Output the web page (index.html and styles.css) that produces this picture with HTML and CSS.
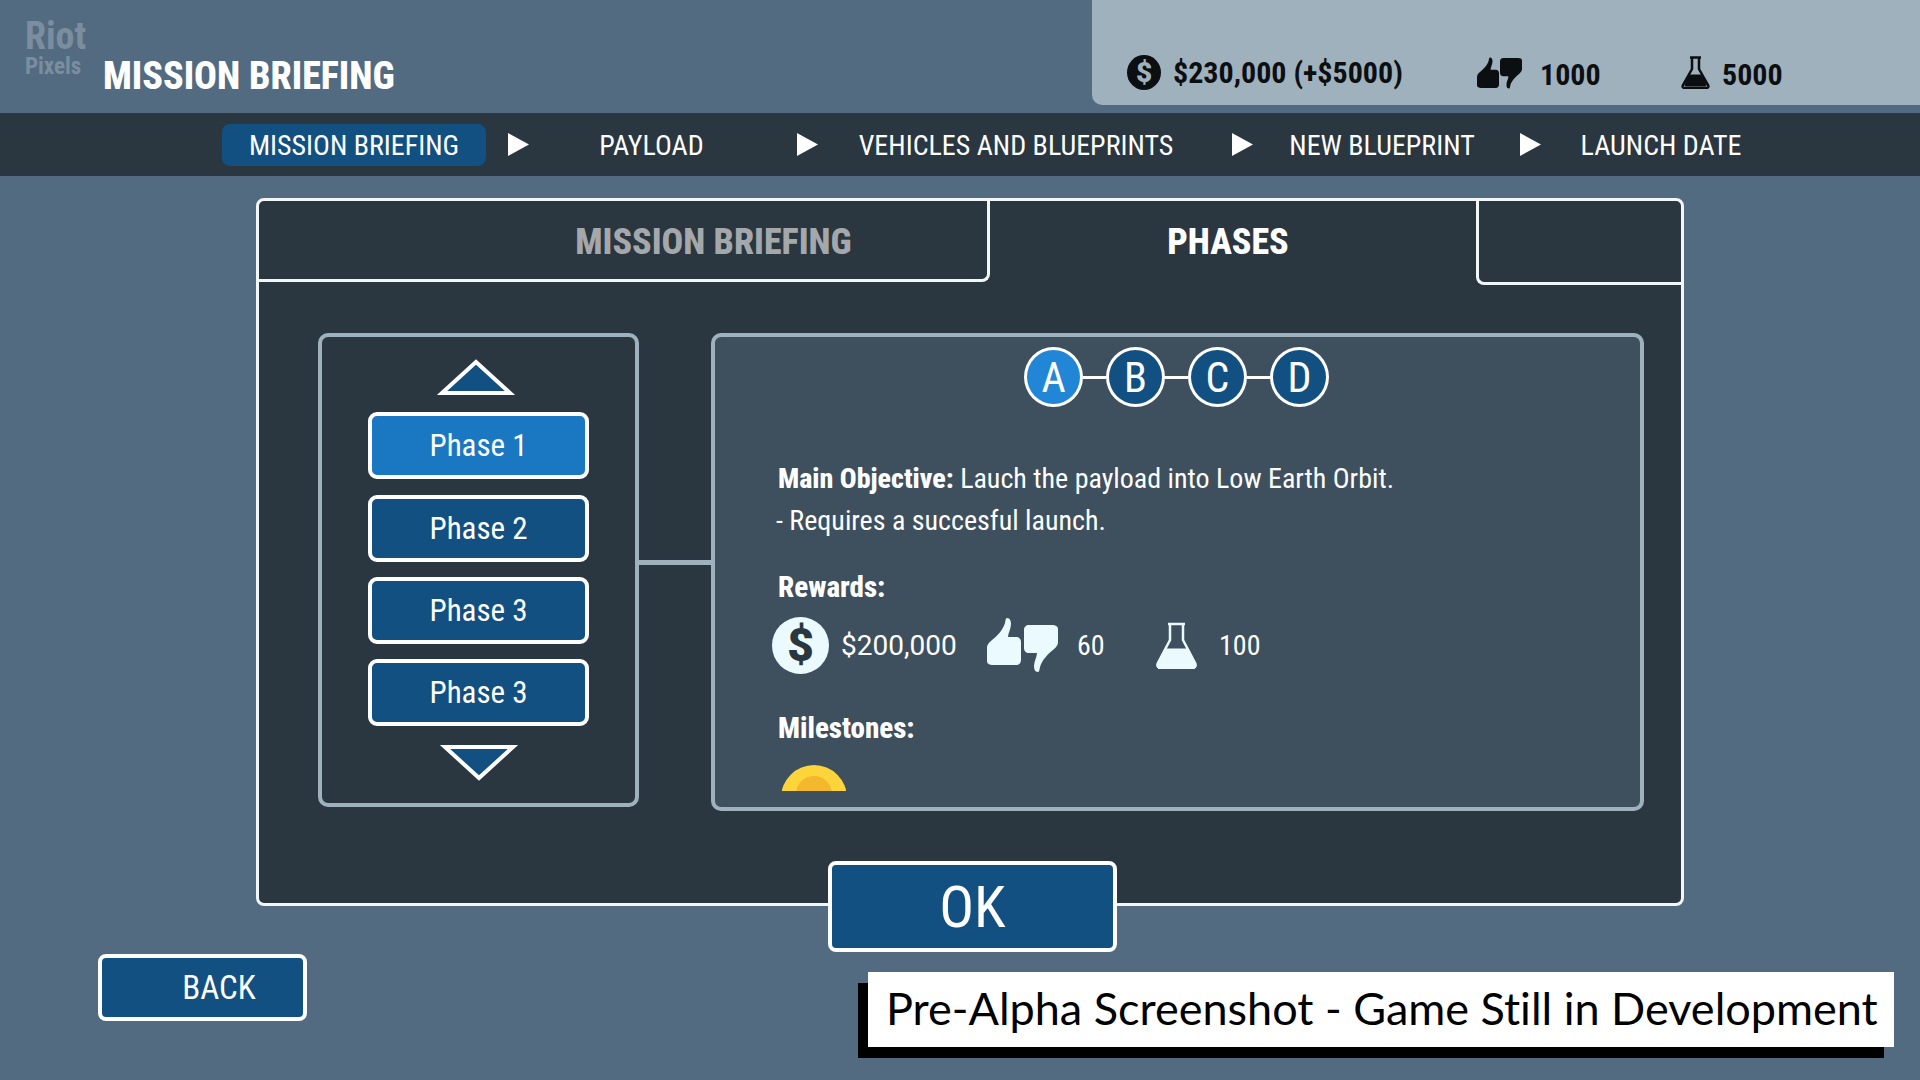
FILE: index.html
```html
<!DOCTYPE html>
<html lang="en">
  <head>
    <meta charset="UTF-8" />
    <title>Mission Briefing</title>
    <link rel="stylesheet" href="styles.css">
  </head>
  <body>
    <svg class="defs" width="0" height="0">
      <symbol id="thumb-up" viewBox="0 0 34 48">
        <path d="M20 0c3 0 4 3 4 6 0 5-3 9-3 13h8c3 0 5 2 5 5v18c0 3-2 5-5 5H6c-3 0-6-1-6-4V30c0-4 3-6 5-8 5-4 11-10 13-17 .5-2 .5-5 2-5z" />
      </symbol>
      <symbol id="thumb-down" viewBox="0 0 34 48">
        <path transform="rotate(180 17 24)" d="M20 0c3 0 4 3 4 6 0 5-3 9-3 13h8c3 0 5 2 5 5v18c0 3-2 5-5 5H6c-3 0-6-1-6-4V30c0-4 3-6 5-8 5-4 11-10 13-17 .5-2 .5-5 2-5z" />
      </symbol>
      <symbol id="arrow" viewBox="0 0 21 23">
        <polygon points="0,0 21,11.5 0,23" />
      </symbol>
    </svg>

    <div class="screen">
      <div class="logo"><b>Riot</b><span>Pixels</span></div>

      <header class="top">
        <h1>MISSION BRIEFING</h1>
        <div class="stats">
          <span class="coin coin-dark">$</span>
          <span class="stat-money">$230,000 (+$5000)</span>
          <span class="thumbs thumbs-small">
            <svg class="thumb"><use href="#thumb-up" /></svg>
            <svg class="thumb"><use href="#thumb-down" /></svg>
          </span>
          <span class="stat-rep">1000</span>
          <svg class="flask flask-small" viewBox="0 0 29 33">
            <path class="flask-line" d="M9 1.5h11M11 2v11L2 29c-1 2 0 3 2 3h21c2 0 3-1 2-3l-9-16V2" />
            <path d="M8 19h13l4 9c.5 1.5 0 2-1 2H5c-1 0-1.500-.5-1-2z" />
          </svg>
          <span class="stat-sci">5000</span>
        </div>
      </header>

      <nav class="steps">
        <span class="step step-current">MISSION BRIEFING</span>
        <svg class="step-arrow arrow-1"><use href="#arrow" /></svg>
        <span class="step step-payload">PAYLOAD</span>
        <svg class="step-arrow arrow-2"><use href="#arrow" /></svg>
        <span class="step step-vehicles">VEHICLES AND BLUEPRINTS</span>
        <svg class="step-arrow arrow-3"><use href="#arrow" /></svg>
        <span class="step step-new">NEW BLUEPRINT</span>
        <svg class="step-arrow arrow-4"><use href="#arrow" /></svg>
        <span class="step step-launch">LAUNCH DATE</span>
      </nav>

      <main class="card">
        <div class="tabs">
          <div class="tab tab-off">MISSION BRIEFING</div>
          <div class="tab tab-on">PHASES</div>
          <div class="tab tab-rest"></div>
        </div>

        <div class="card-body">
          <div class="phase-list">
            <svg class="list-arrow list-up" viewBox="0 0 80 36">
              <polygon points="40,3 74,34 6,34" />
            </svg>
            <button class="phase phase-active">Phase 1</button>
            <button class="phase">Phase 2</button>
            <button class="phase">Phase 3</button>
            <button class="phase">Phase 3</button>
            <svg class="list-arrow list-down" viewBox="0 0 80 36">
              <polygon points="6,2 74,2 40,33" />
            </svg>
          </div>

          <div class="link"></div>

          <section class="detail">
            <div class="dots">
              <span class="dot dot-active">A</span>
              <i class="dot-link"></i>
              <span class="dot">B</span>
              <i class="dot-link"></i>
              <span class="dot">C</span>
              <i class="dot-link"></i>
              <span class="dot">D</span>
            </div>

            <p class="objective"><b>Main Objective:</b> Lauch the payload into Low Earth Orbit.</p>
            <p class="requires">- Requires a succesful launch.</p>

            <h3 class="rewards-title">Rewards:</h3>
            <div class="rewards">
              <span class="coin coin-light">$</span>
              <span class="reward-money">$200,000</span>
              <span class="thumbs thumbs-big">
                <svg class="thumb"><use href="#thumb-up" /></svg>
                <svg class="thumb"><use href="#thumb-down" /></svg>
              </span>
              <span class="reward-rep">60</span>
              <svg class="flask flask-big" viewBox="0 0 41 47">
                <path class="flask-line" d="M12 2h17M14 2v16L2 41c-1 3 0 5 3 5h31c3 0 4-2 3-5L27 18V2" />
                <path d="M9 27h23l8 15c.5 3-1 5-4 5H5c-3 0-4.500-2-4-5z" />
              </svg>
              <span class="reward-sci">100</span>
            </div>

            <h3 class="milestones-title">Milestones:</h3>
            <svg class="medal" viewBox="0 0 64 26">
              <circle cx="32" cy="33" r="33" fill="#fdd53b" />
              <circle cx="32" cy="29" r="18" fill="#f3b82e" />
            </svg>
          </section>
        </div>

        <button class="ok">OK</button>
      </main>

      <button class="back">BACK</button>

      <div class="stamp">Pre-Alpha Screenshot - Game Still in Development</div>
    </div>
  </body>
</html>
```

FILE: styles.css
```css
*,
*::before,
*::after {
  box-sizing: border-box;
  margin: 0;
  padding: 0;
}
body {
  background-color: #526b80;
  color: #fff;
  font-family: Roboto, "Liberation Sans", sans-serif;
  font-stretch: 80%;
}
.defs {
  position: absolute;
}
.screen {
  position: relative;
  width: 1920px;
  height: 1080px;
  overflow: hidden;
}

/* watermark */
.logo {
  position: absolute;
  left: 25px;
  top: 16px;
  display: flex;
  flex-direction: column;
  color: #7b8e9f;
  font-stretch: 75%;
}
.logo b {
  font-size: 38px;
  line-height: 40px;
}
.logo span {
  font-size: 23px;
  line-height: 22px;
  font-weight: 700;
}

/* header */
.top {
  display: flex;
  justify-content: space-between;
  height: 113px;
}
h1 {
  margin: 54px 0 0 103px;
  font-size: 38px;
  line-height: 44px;
  font-weight: 800;
  font-stretch: 83%;
  white-space: nowrap;
}
.stats {
  display: flex;
  align-items: center;
  width: 828px;
  height: 105px;
  padding: 40px 0 0 35px;
  background-color: #9fb1bd;
  border-bottom-left-radius: 10px;
  color: #0c0f12;
  font-size: 30px;
  font-weight: 700;
  font-stretch: 82%;
}
.coin {
  display: flex;
  align-items: center;
  justify-content: center;
  flex-shrink: 0;
  border-radius: 50%;
  font-weight: 900;
  font-stretch: 100%;
}
.coin-dark {
  width: 34px;
  height: 35px;
  background-color: #0c0f12;
  color: #9fb1bd;
  font-size: 28px;
}
.stat-money {
  margin-left: 12px;
  width: 245px;
  white-space: nowrap;
}
.thumbs {
  display: flex;
  flex-shrink: 0;
}
.thumbs-small {
  margin-left: 59px;
  gap: 1px;
  fill: #0c0f12;
}
.thumbs-small .thumb {
  width: 22px;
  height: 32px;
}
.stat-rep {
  margin-left: 18px;
  width: 60px;
  margin-top: 4px;
}
.flask {
  flex-shrink: 0;
}
.flask-line {
  fill: none;
  stroke-width: 2.5;
}
.flask-small {
  margin-left: 81px;
  width: 29px;
  height: 33px;
  fill: #0c0f12;
  stroke: #0c0f12;
}
.stat-sci {
  margin-left: 12px;
  margin-top: 4px;
}

/* step bar */
.steps {
  display: flex;
  align-items: center;
  height: 63px;
  padding-left: 222px;
  background-color: #2a3640;
  font-size: 28px;
}
.step {
  display: block;
  height: 42px;
  padding-top: 1px;
  line-height: 42px;
  text-align: center;
  white-space: nowrap;
}
.step-current {
  width: 264px;
  background-color: #125082;
  border-radius: 8px;
}
.step-payload {
  width: 113px;
  margin-left: 66px;
}
.step-vehicles {
  width: 332px;
  margin-left: 32px;
}
.step-new {
  width: 198px;
  margin-left: 30px;
}
.step-launch {
  width: 170px;
  margin-left: 35px;
}
.step-arrow {
  width: 21px;
  height: 23px;
  fill: #fff;
}
.arrow-1 { margin-left: 22px; }
.arrow-2 { margin-left: 89px; }
.arrow-3 { margin-left: 50px; }
.arrow-4 { margin-left: 39px; }

/* main card */
.card {
  position: relative;
  width: 1428px;
  height: 708px;
  margin: 22px 0 0 256px;
  background-color: #2a3640;
  border: 3px solid #f3f6f7;
  border-radius: 8px;
}
.tabs {
  display: flex;
  height: 81px;
}
.tab {
  display: flex;
  align-items: center;
  justify-content: center;
  font-size: 36px;
  font-weight: 800;
}
.tab-off {
  width: 731px;
  padding: 4px 0 0 181px;
  color: #a4a8ab;
  border-right: 3px solid #f3f6f7;
  border-bottom: 3px solid #f3f6f7;
  border-bottom-right-radius: 8px;
}
.tab-on {
  width: 486px;
  padding-right: 10px;
  font-stretch: 75%;
}
.tab-rest {
  flex: 1;
  height: 84px;
  border-left: 3px solid #f3f6f7;
  border-bottom: 3px solid #f3f6f7;
  border-bottom-left-radius: 8px;
}
.card-body {
  display: flex;
  align-items: flex-start;
  padding: 51px 0 0 59px;
}

/* phase list */
.phase-list {
  display: flex;
  flex-direction: column;
  align-items: center;
  width: 321px;
  height: 474px;
  padding-top: 22px;
  border: 4px solid #9fb1bd;
  border-radius: 10px;
}
.list-arrow {
  width: 80px;
  height: 36px;
  fill: #125082;
  stroke: #fff;
  stroke-width: 4;
}
.list-up {
  margin-right: 5px;
  margin-bottom: 17px;
}
.list-down {
  margin-top: 19px;
}
.phase {
  width: 221px;
  height: 67px;
  margin-bottom: 15px;
  background-color: #125082;
  border: 4px solid #fff;
  border-radius: 9px;
  color: #fff;
  font-family: inherit;
  font-stretch: 80%;
  font-size: 31px;
}
.phase:last-of-type {
  margin-bottom: 0;
}
.phase-active {
  margin-bottom: 16px;
  background-color: #1a78c2;
}
.link {
  width: 72px;
  height: 5px;
  margin-top: 227px;
  background-color: #9fb1bd;
}

/* phase details */
.detail {
  width: 933px;
  height: 478px;
  padding: 10px 60px 0 63px;
  background-color: #3e4f5e;
  border: 4px solid #9fb1bd;
  border-radius: 10px;
}
.dots {
  display: flex;
  align-items: center;
  justify-content: center;
  margin-right: 5px;
}
.dot {
  display: flex;
  align-items: center;
  justify-content: center;
  width: 59px;
  height: 60px;
  background-color: #125082;
  border: 3px solid #fff;
  border-radius: 50%;
  font-size: 42px;
  font-stretch: 85%;
}
.dot-active {
  background-color: #2186d6;
}
.dot-link {
  width: 23px;
  height: 3px;
  background-color: #fff;
}
.objective,
.requires {
  font-size: 28px;
  line-height: 42px;
}
.objective {
  margin-top: 51px;
}
.requires {
  margin-left: -2px;
}
.objective b,
h3 {
  font-weight: 800;
}
h3 {
  font-size: 29px;
  line-height: 34px;
}
.rewards-title {
  margin-top: 28px;
}
.rewards {
  display: flex;
  align-items: center;
  height: 60px;
  margin: 11px 0 0 -6px;
  font-size: 28px;
}
.coin-light {
  width: 57px;
  height: 57px;
  background-color: #eafaff;
  color: #2a3640;
  font-size: 46px;
}
.reward-money {
  width: 116px;
  margin-left: 12px;
  font-stretch: 90%;
}
.thumbs-big {
  margin-left: 30px;
  gap: 3px;
  fill: #eafaff;
}
.thumbs-big .thumb {
  width: 34px;
  height: 48px;
}
.thumbs-big .thumb:last-child {
  margin-top: 6px;
}
.reward-rep {
  width: 31px;
  margin-left: 19px;
  font-stretch: 85%;
}
.flask-big {
  width: 41px;
  height: 47px;
  margin-left: 48px;
  fill: #eafaff;
  stroke: #eafaff;
}
.reward-sci {
  margin-left: 22px;
}
.milestones-title {
  margin-top: 36px;
}
.medal {
  display: block;
  width: 64px;
  height: 26px;
  margin: 20px 0 0 4px;
}

/* buttons */
.ok,
.back {
  background-color: #125082;
  border: 4px solid #fff;
  border-radius: 8px;
  color: #fff;
  font-family: inherit;
  font-stretch: 80%;
}
.ok {
  position: absolute;
  left: 569px;
  top: 660px;
  width: 289px;
  height: 91px;
  font-size: 58px;
}
.back {
  display: block;
  width: 209px;
  height: 67px;
  margin: 48px 0 0 98px;
  padding-left: 33px;
  font-size: 33px;
}

/* overlay caption */
.stamp {
  position: absolute;
  left: 868px;
  top: 972px;
  width: 1026px;
  height: 75px;
  padding-left: 18px;
  background-color: #fff;
  box-shadow: -10px 11px 0 #000;
  color: #000;
  font-family: Lato, sans-serif;
  font-stretch: normal;
  font-variant-ligatures: none;
  font-size: 45px;
  line-height: 72px;
  white-space: nowrap;
}
```
